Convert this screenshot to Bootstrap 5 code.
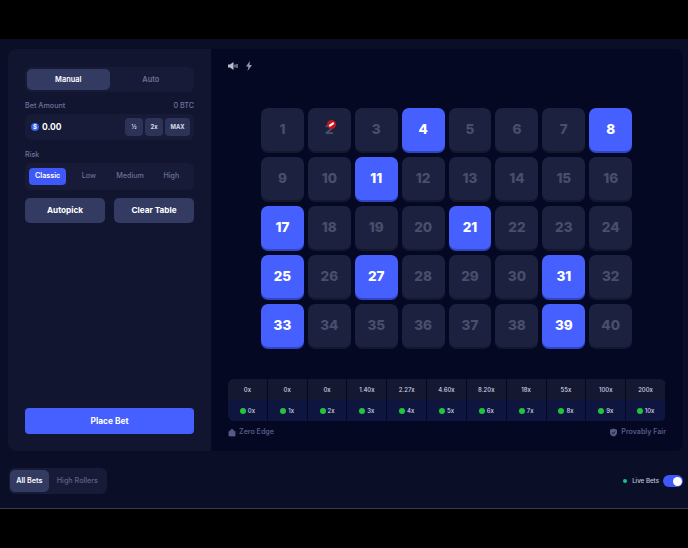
<!DOCTYPE html>
<html lang="en">
<head>
    <meta charset="UTF-8">
    <meta name="viewport" content="width=device-width, initial-scale=1.0">
    <title>Keno</title>
    <link rel="stylesheet" href="https://cdn.jsdelivr.net/npm/bootstrap@5.3.0/dist/css/bootstrap.min.css">
    <style>
        html, body { height: 548px; overflow: hidden; background: #000; }
        body { font-family: Inter, "Liberation Sans", sans-serif; color: #fff; }
        .top-gap { height: 39px; background: #000; }
        .page-wrap { height: 470px; background: #0b0e27; border-bottom: 1px solid #3a3c4e; padding: 10px 5px 0 8px; }
        .game-row { height: 402px; }
        .side-panel { width: 203px; flex: none; background: #12152f; border-radius: 8px 0 0 8px; padding: 18px 17px 17px; }
        .play-panel { flex: 1; background: #050822; border-radius: 0 8px 8px 0; padding: 0 17px 0 17px; }
        .seg-box { background: #171b37; border-radius: 6px; padding: 2px; height: 25px; }
        .seg-btn { flex: 1; font-size: 7.4px; font-weight: 600; color: #6c7199; display: flex; align-items: center; justify-content: center; border-radius: 5px; padding-top: 1px; }
        .seg-btn.on { background: #343b62; color: #fff; }
        .field-label { font-size: 7.2px; font-weight: 500; color: #6f749b; margin: 0; line-height: 10px; }
        .amount-box { background: #171b37; border-radius: 6px; height: 26px; padding: 0 4px 0 6px; margin-top: 3px; }
        .coin { width: 8px; height: 8px; border-radius: 50%; background: #2f62ee; font-size: 6px; line-height: 8px; text-align: center; font-weight: 700; }
        .amount-val { font-size: 8.5px; font-weight: 700; margin-left: 3px; }
        .mini-btn { background: #2d3356; border-radius: 4px; height: 18px; width: 18px; font-size: 5.8px; font-weight: 700; color: #d9dcee; display: flex; align-items: center; justify-content: center; margin-left: 2px; }
        .mini-btn.wide { width: 25px; }
        .risk-box { background: #171b37; border-radius: 6px; height: 27px; padding: 0 4px; margin-top: 3px; display: grid; grid-template-columns: repeat(4, 1fr); column-gap: 4px; align-items: center; }
        .risk-btn { font-size: 7.2px; font-weight: 500; color: #6c7199; height: 17px; display: flex; align-items: center; justify-content: center; border-radius: 4px; }
        .risk-btn.on { background: #3f58f8; color: #fff; font-weight: 600; }
        .act-btn { width: 80px; height: 25px; background: #343b62; border-radius: 5px; font-size: 8.2px; font-weight: 700; color: #fff; display: flex; align-items: center; justify-content: center; }
        .place-btn { height: 26px; background: #4560ff; border-radius: 4px; font-size: 8.4px; font-weight: 700; display: flex; align-items: center; justify-content: center; margin-top: auto; }
        .sound-row { height: 59px; padding: 12px 0 0 0; gap: 7px; }
        .tile-grid { display: grid; grid-template-columns: repeat(8, 42.9px); grid-auto-rows: 46px; column-gap: 4px; row-gap: 3px; margin-left: 33px; }
        .tile { height: 43px; background: #1c2140; border-radius: 7px; font-size: 13.5px; font-weight: 800; color: #494e6d; display: flex; align-items: center; justify-content: center; box-shadow: 0 2px 0 #14182f; position: relative; }
        .tile.on { background: #4560ff; color: #fff; box-shadow: 0 2px 0 #2f45c4; }
        .ban-mark { position: absolute; left: 19.5px; top: 11.5px; width: 9px; height: 9px; }
        .pay-table { margin-top: 29px; border-radius: 6px; overflow: hidden; }
        .pay-row { display: grid; grid-template-columns: repeat(11, 1fr); height: 21px; }
        .pay-row > div { font-size: 6px; font-weight: 500; color: #d3d6e8; display: flex; align-items: center; justify-content: center; border-right: 1px solid #050822; gap: 2px; }
        .pay-row.top > div { background: #141831; }
        .pay-row.low > div { background: #0e1640; }
        .gem { width: 6px; height: 6px; border-radius: 50%; background: #22c43a; }
        .foot-note { font-size: 7.1px; font-weight: 600; color: #565b85; gap: 3px; margin-top: 6px; }
        .bottom-row { height: 58px; padding: 17px 0 0 1px; }
        .bets-box { background: #171b37; border-radius: 6px; height: 26px; width: 98px; padding: 2px 1px; }
        .bets-tab { font-size: 7.2px; font-weight: 500; color: #5f648c; display: flex; align-items: center; justify-content: center; border-radius: 5px; padding: 0 8px; white-space: nowrap; }
        .bets-tab.on { background: #343b62; color: #fff; font-weight: 600; width: 39px; padding: 0; }
        .live-dot { width: 4px; height: 4px; border-radius: 50%; background: #12c48b; }
        .live-text { font-size: 6.2px; font-weight: 500; color: #c4c7da; margin: 0 4px 0 5px; }
        .live-switch { width: 20px; height: 12px; border-radius: 6px; background: #3f58f8; position: relative; }
        .live-knob { position: absolute; right: 1px; top: 1.5px; width: 9px; height: 9px; border-radius: 50%; background: #fff; }
    </style>
</head>
<body>
    <div class="top-gap"></div>
    <div class="page-wrap">
        <div class="game-row d-flex">
            <div class="side-panel d-flex flex-column">
                <div class="seg-box d-flex">
                    <div class="seg-btn on">Manual</div>
                    <div class="seg-btn">Auto</div>
                </div>
                <div class="d-flex justify-content-between" style="margin-top:9px">
                    <p class="field-label">Bet Amount</p>
                    <p class="field-label">0 BTC</p>
                </div>
                <div class="amount-box d-flex align-items-center">
                    <div class="coin">$</div>
                    <div class="amount-val me-auto">0.00</div>
                    <div class="mini-btn">½</div>
                    <div class="mini-btn">2x</div>
                    <div class="mini-btn wide">MAX</div>
                </div>
                <p class="field-label" style="margin-top:10px">Risk</p>
                <div class="risk-box">
                    <div class="risk-btn on">Classic</div>
                    <div class="risk-btn">Low</div>
                    <div class="risk-btn">Medium</div>
                    <div class="risk-btn">High</div>
                </div>
                <div class="d-flex justify-content-between" style="margin-top:8px">
                    <div class="act-btn">Autopick</div>
                    <div class="act-btn">Clear Table</div>
                </div>
                <div class="place-btn">Place Bet</div>
            </div>
            <div class="play-panel">
                <div class="sound-row d-flex">
                    <svg width="10" height="10" viewBox="0 0 10 10"><path d="M0 3.500h2L5.500 1v8L2 6.500H0z" fill="#b9bccd"/><path d="M7 3.500v3M9 3v4" stroke="#b9bccd" stroke-width="1"/></svg>
                    <svg width="8" height="10" viewBox="0 0 8 10"><path d="M5 0 1 5.500h2.500L2.500 10 7 4H4.400z" fill="#9a9db1"/></svg>
                </div>
                <div class="tile-grid" id="tileGrid"></div>
                <div class="pay-table">
                    <div class="pay-row top" id="payTop"></div>
                    <div class="pay-row low" id="payLow"></div>
                </div>
                <div class="d-flex justify-content-between">
                    <div class="foot-note d-flex align-items-center">
                        <svg width="8" height="9" viewBox="0 0 9 9"><path d="M1 3h7v5.500H1zM2.500 3l1-2h2l1 2" fill="#565b85" stroke="#565b85" stroke-width=".7"/></svg>
                        Zero Edge
                    </div>
                    <div class="foot-note d-flex align-items-center">
                        <svg width="9" height="9" viewBox="0 0 9 9"><path d="M4.500.5 8 1.700v3c0 2-1.500 3.200-3.500 3.900C2.500 7.900 1 6.700 1 4.700v-3z" fill="#565b85"/><path d="M3 4.500l1.200 1.200L6 3.500" stroke="#050822" fill="none"/></svg>
                        Provably Fair
                    </div>
                </div>
            </div>
        </div>
        <div class="bottom-row d-flex justify-content-between align-items-start">
            <div class="bets-box d-flex">
                <div class="bets-tab on">All Bets</div>
                <div class="bets-tab">High Rollers</div>
            </div>
            <div class="d-flex align-items-center" style="margin-top:7px">
                <div class="live-dot"></div>
                <div class="live-text">Live Bets</div>
                <div class="live-switch"><div class="live-knob"></div></div>
            </div>
        </div>
    </div>

    <script>
        const picked = [4, 8, 11, 17, 21, 25, 27, 31, 33, 39];
        const tileGrid = document.getElementById('tileGrid');
        for (let i = 1; i <= 40; i++) {
            const tile = document.createElement('div');
            tile.className = picked.includes(i) ? 'tile on' : 'tile';
            tile.textContent = i;
            if (i === 2) {
                tile.innerHTML += '<svg class="ban-mark" viewBox="0 0 10 10"><circle cx="5" cy="5" r="5" fill="#c8141c"/><path d="M2.500 6.800 7.500 3.200" stroke="#fff" stroke-width="2.200"/></svg>';
            }
            tileGrid.appendChild(tile);
        }
        const pays = ['0x', '0x', '0x', '1.40x', '2.27x', '4.60x', '8.20x', '18x', '55x', '100x', '200x'];
        const payTop = document.getElementById('payTop');
        const payLow = document.getElementById('payLow');
        pays.forEach((p, i) => {
            payTop.innerHTML += '<div>' + p + '</div>';
            payLow.innerHTML += '<div><span class="gem"></span>' + i + 'x</div>';
        });
    </script>
    <script src="https://cdn.jsdelivr.net/npm/bootstrap@5.3.0/dist/js/bootstrap.bundle.min.js"></script>
</body>
</html>
